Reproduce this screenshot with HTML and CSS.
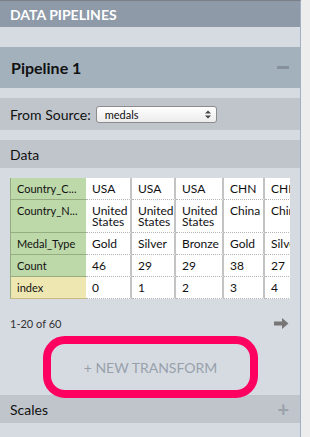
FILE: index.html
```html
<!DOCTYPE html>
<html>
  <head>
    <title>Data Pipelines</title>
    <link rel="stylesheet" href="styles.css">
  </head>
  <body>
    <div class="panel">
      <div class="panel-title">DATA PIPELINES</div>

      <div class="pipeline-head">
        <span>Pipeline 1</span>
        <span class="minus"></span>
      </div>

      <div class="bar source-row">
        <label for="source">From Source:</label>
        <div class="select">
          <span>medals</span>
          <svg width="6" height="9" viewBox="0 0 6 9">
            <path d="M0 3.5 L3 0.5 L6 3.5 Z M0 5.5 L3 8.5 L6 5.5 Z" fill="#444" />
          </svg>
        </div>
      </div>

      <div class="bar data-row">Data</div>

      <div class="table-wrap">
        <table class="data-table">
          <tr>
            <th class="c0">Country_C...</th>
            <td class="c1">USA</td><td class="c2">USA</td><td class="c3">USA</td><td class="c4">CHN</td><td class="c5">CHN</td>
          </tr>
          <tr>
            <th>Country_N...</th>
            <td>United States</td><td>United States</td><td>United States</td><td>China</td><td>China</td>
          </tr>
          <tr>
            <th>Medal_Type</th>
            <td>Gold</td><td>Silver</td><td>Bronze</td><td>Gold</td><td>Silver</td>
          </tr>
          <tr>
            <th>Count</th>
            <td>46</td><td>29</td><td>29</td><td>38</td><td>27</td>
          </tr>
          <tr class="index-row">
            <th>index</th>
            <td>0</td><td>1</td><td>2</td><td>3</td><td>4</td>
          </tr>
        </table>
      </div>

      <div class="pager">
        <span>1-20 of 60</span>
        <svg width="15" height="11" viewBox="0 0 15 11">
          <path d="M0 3.5 H8 V0 L14.5 5.5 L8 11 V7.5 H0 Z" fill="#777" />
        </svg>
      </div>

      <div class="transform">+ NEW TRANSFORM</div>

      <div class="bar scales-row">
        <span>Scales</span>
        <span class="plus">+</span>
      </div>
    </div>
  </body>
</html>
```

FILE: styles.css
```css
body {
  margin: 0;
  height: 437px;
  background-color: #ededed;
  font-family: Lato, "Open Sans", sans-serif;
  color: #111;
  overflow: hidden;
}
.panel {
  width: 300px;
  height: 436px;
  border-top: 1px solid #7a7f86;
  border-right: 1px solid #9fb1c2;
  background-color: #d6dbe2;
}
.panel-title {
  height: 26px;
  line-height: 27px;
  padding-left: 10px;
  background-color: #8e9aa8;
  color: #fff;
  font-size: 14px;
  font-weight: 700;
}
.pipeline-head {
  margin-top: 20px;
  height: 41px;
  padding: 0 11px 0 11px;
  background-color: #a3b1bd;
  display: flex;
  align-items: center;
  justify-content: space-between;
  font-size: 16px;
  font-weight: 700;
}
.minus {
  width: 12px;
  height: 3px;
  background-color: #87919b;
}
.bar {
  background-color: #c0c5cc;
  padding-left: 10px;
  display: flex;
  align-items: center;
  font-size: 14px;
}
.source-row {
  margin-top: 10px;
  height: 32px;
  gap: 5px;
}
.select {
  width: 106px;
  height: 15px;
  padding: 0 5px 0 8px;
  border: 1px solid #8c8c8c;
  border-radius: 3px;
  background: linear-gradient(#ffffff, #ececec);
  display: flex;
  align-items: center;
  justify-content: space-between;
  font-size: 11px;
}
.data-row {
  margin-top: 10px;
  height: 28px;
}
.table-wrap {
  margin: 10px 0 0 10px;
  width: 280px;
  overflow: hidden;
}
.data-table {
  border-collapse: separate;
  border-spacing: 0;
  table-layout: fixed;
  width: 301px;
  font-size: 11px;
  line-height: 11px;
}
.data-table th,
.data-table td {
  box-sizing: border-box;
  vertical-align: top;
  overflow: hidden;
}
.data-table th {
  padding: 5px 6px;
  background-color: #bdd8a9;
  border-bottom: 1px solid #95ad80;
  border-left: 1px solid #95ad80;
  font-weight: 400;
  text-align: left;
  white-space: nowrap;
}
.data-table td {
  padding: 5px 2px 5px 6px;
  background-color: #fff;
  border-right: 2px solid #c3c3c3;
  border-bottom: 1px dotted #b5b5b5;
  font-size: 12px;
}
.data-table tr:first-child th,
.data-table tr:first-child td {
  height: 21px;
}
.data-table .c0 { width: 76px; }
.data-table .c1 { width: 46px; }
.data-table .c2 { width: 44px; }
.data-table .c3 { width: 48px; }
.data-table .c4 { width: 41px; }
.data-table .c5 { width: 46px; }
.index-row th {
  background-color: #efe7b1;
  border-bottom-color: #c9bd84;
}
.pager {
  margin-top: 18px;
  padding: 0 11px 0 10px;
  display: flex;
  align-items: center;
  justify-content: space-between;
  font-size: 11px;
  color: #333;
}
.transform {
  position: relative;
  margin: 6px 0 -3px 43px;
  width: 199px;
  height: 46px;
  border: 8px solid #fe0060;
  border-radius: 22px;
  display: flex;
  align-items: center;
  justify-content: center;
  color: #98a1ab;
  font-size: 14px;
}
.scales-row {
  height: 28px;
  padding-right: 11px;
  justify-content: space-between;
}
.plus {
  color: #9aa1a9;
  font-size: 20px;
  font-weight: 700;
}
```
